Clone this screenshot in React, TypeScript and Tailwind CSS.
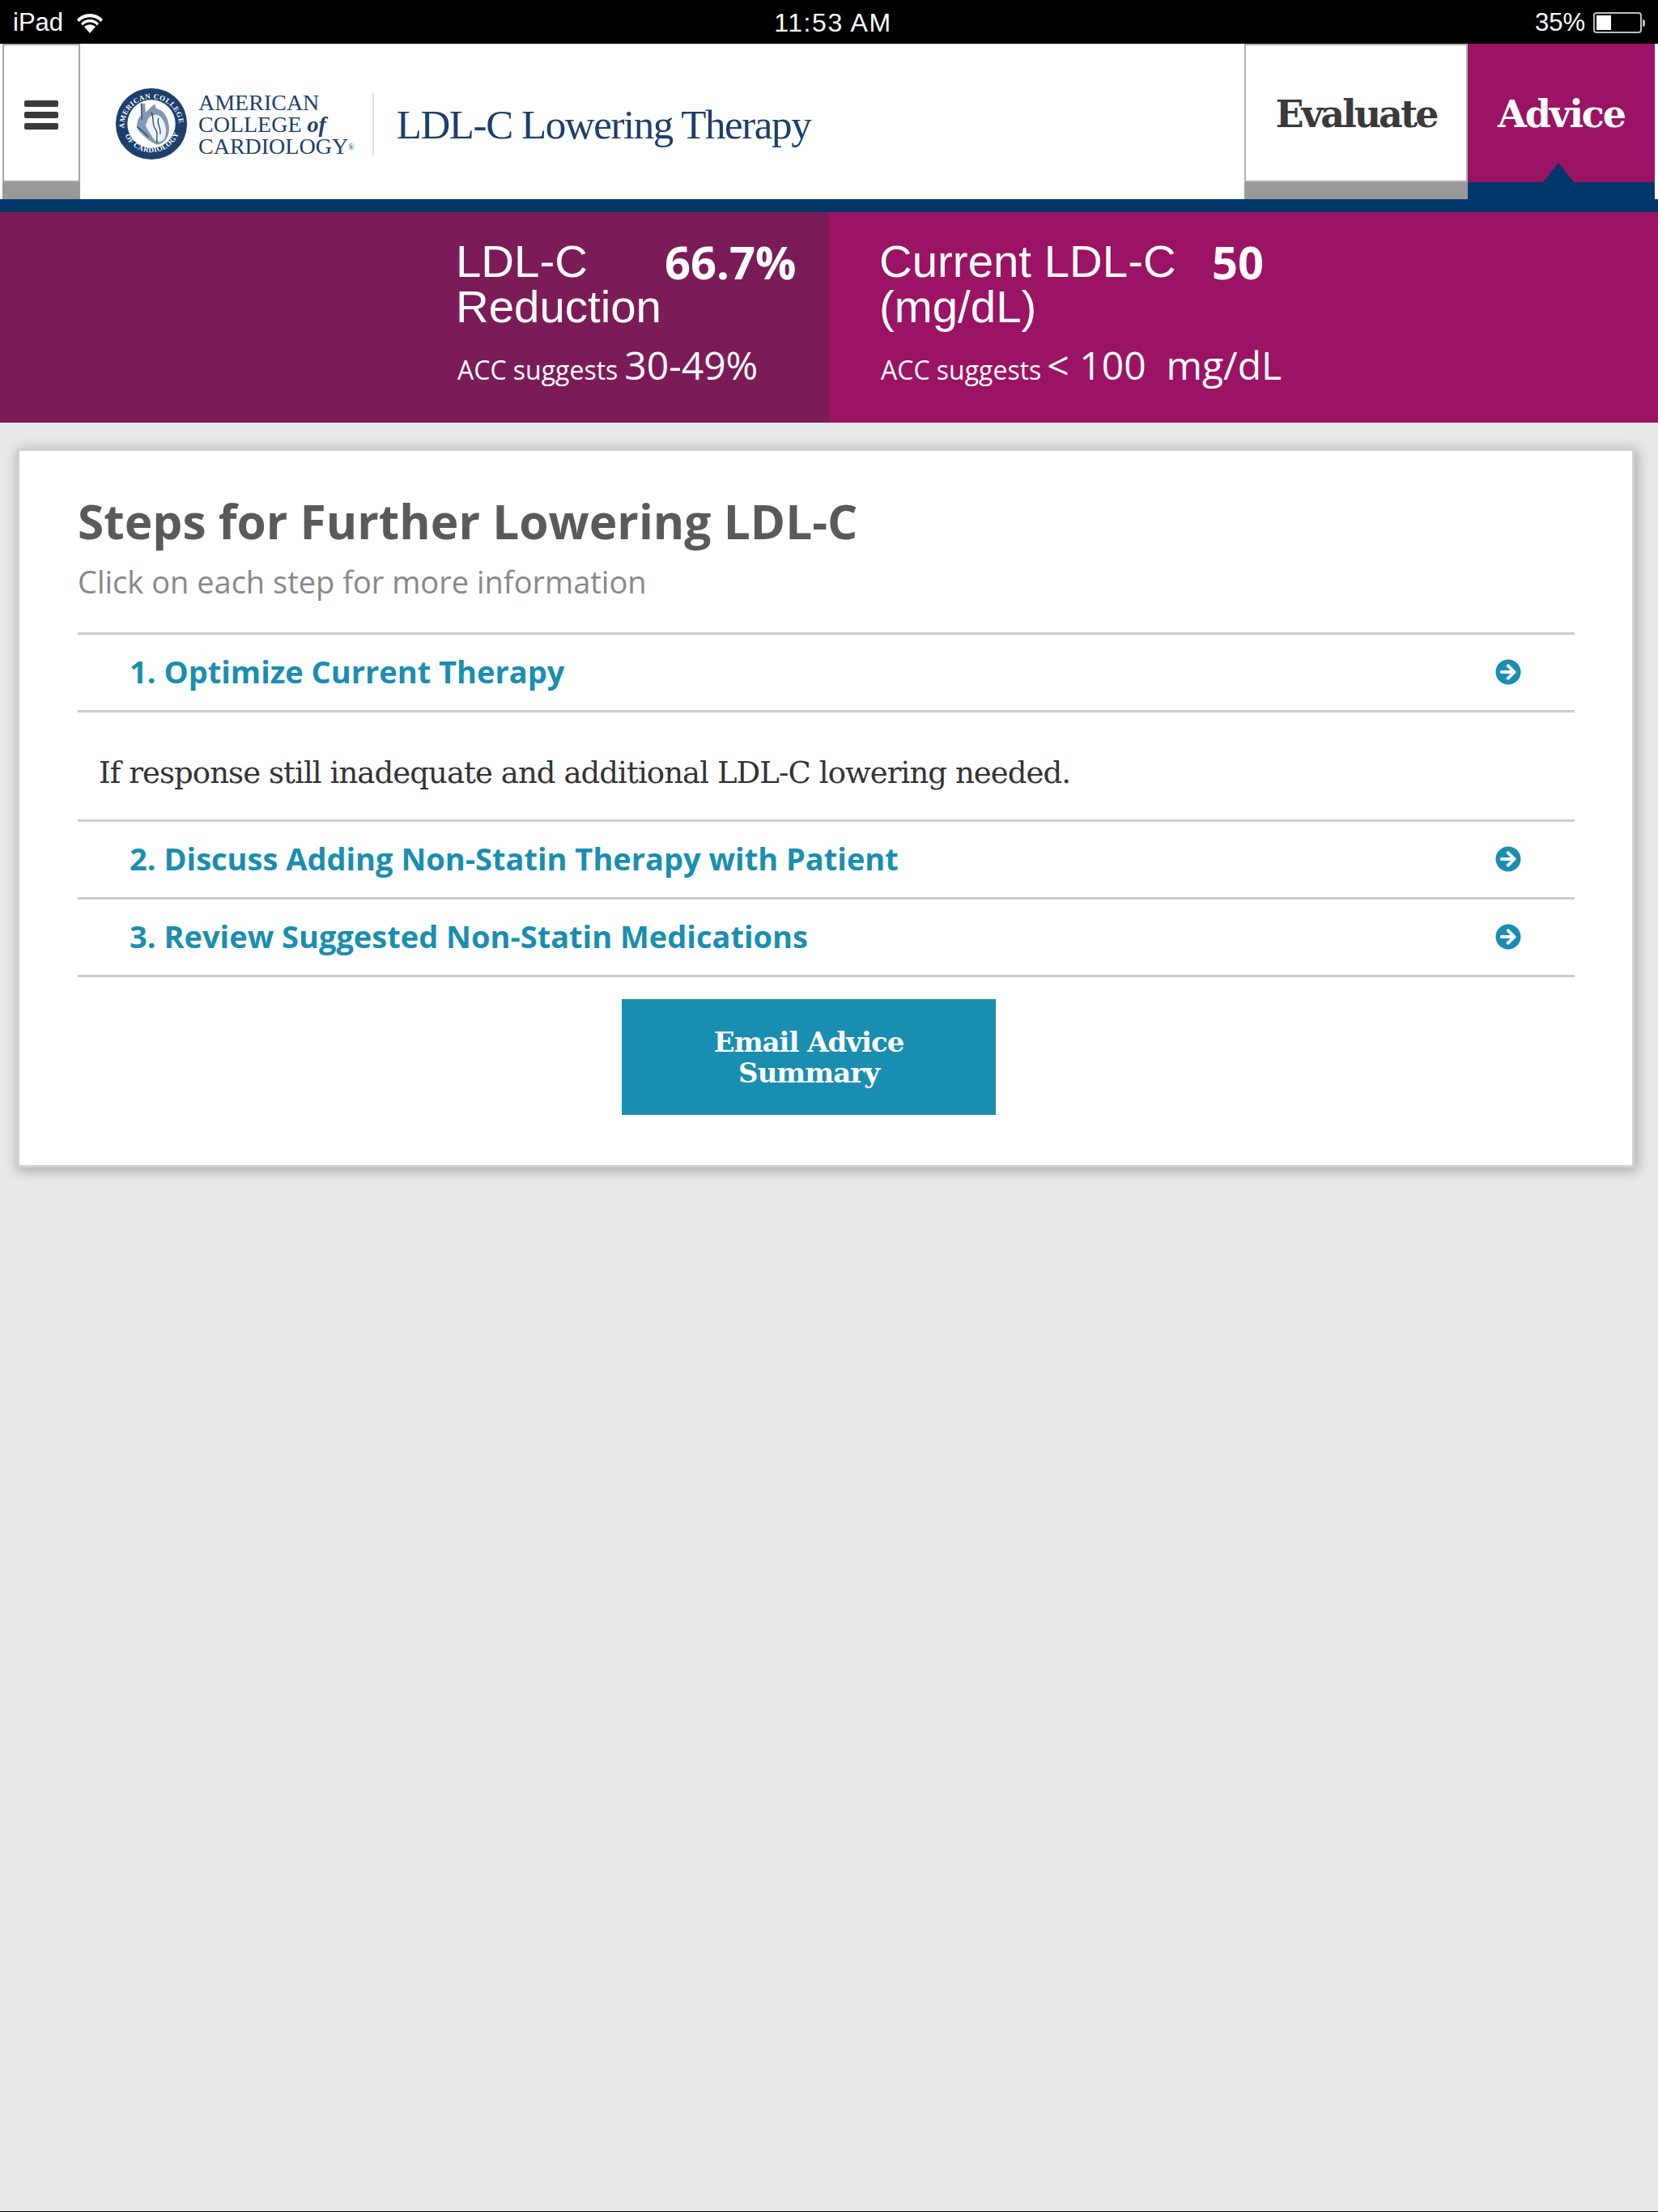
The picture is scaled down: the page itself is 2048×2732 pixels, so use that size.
import React from "react";
import { FaArrowCircleRight } from "react-icons/fa";

const Seal = () => (
  <svg width="90" height="90" viewBox="0 0 100 100" className="shrink-0">
    <defs>
      <path id="sealTop" d="M 13 56 A 37.5 37.5 0 0 1 88 50" />
      <path id="sealBottom" d="M 11 58 A 40 40 0 0 0 89 58" />
    </defs>
    <circle cx="50" cy="50" r="49" fill="#1d3f6e" />
    <circle cx="50" cy="50" r="33" fill="#fff" />
    <text fontFamily="Liberation Serif, serif" fontSize="10" fontWeight="700" fill="#fff" letterSpacing="0.6">
      <textPath href="#sealTop">AMERICAN COLLEGE</textPath>
    </text>
    <text fontFamily="Liberation Serif, serif" fontSize="10" fontWeight="700" fill="#fff" letterSpacing="0.6">
      <textPath href="#sealBottom" startOffset="8%">OF CARDIOLOGY</textPath>
    </text>
    {/* heart */}
    <path
      d="M36 22 L41 22 L42 34 C48 30 52 22 56 24 C54 28 58 30 64 32 C70 36 76 50 74 62 C72 72 64 80 56 78 C48 74 40 68 33 60 C28 54 30 44 36 38 Z"
      fill="#8298b5"
    />
    <path
      d="M46 42 C52 36 60 36 64 42 C70 50 72 60 68 70 C64 76 58 76 54 72 C50 66 44 58 42 52 Z"
      fill="#eef2f6"
    />
    <path
      d="M36 22 L37 44 M50 34 C54 42 50 50 56 58 C60 64 56 70 58 76 M60 42 C56 48 64 56 62 64 M30 54 C36 58 40 62 46 68"
      fill="none"
      stroke="#1d3f6e"
      strokeWidth="1.4"
    />
  </svg>
);

const Step = ({ label }: { label: string }) => (
  <div className="flex h-[96px] items-center justify-between border-t-[3px] border-[#cccccc] pb-[2px] pl-[64px] pr-[66px]">
    <span className="mb-[2px] text-[38px] font-bold leading-none text-[#1a8eb0]">{label}</span>
    <FaArrowCircleRight className="text-[32px] text-[#1a8eb0]" />
  </div>
);

export default function App() {
  return (
    <div className="relative flex min-h-[2732px] flex-col border-b border-black bg-[#e8e8e8] [font-family:'Open_Sans',sans-serif]">
      {/* status bar */}
      <div className="flex h-[54px] items-center justify-between bg-black pl-[16px] pr-[16px] pt-[2px] text-[31px] text-white [font-family:'Liberation_Sans',sans-serif]">
        <div className="flex w-[310px] items-center gap-[16px]">
          <span>iPad</span>
          <svg width="34" height="26" viewBox="0 0 34 26" fill="#fff">
            <path d="M17 26 L10 18 A10 10 0 0 1 24 18 Z" />
            <path d="M17 9 A15 15 0 0 0 6 14 L8 16.5 A12 12 0 0 1 26 16.5 L28 14 A15 15 0 0 0 17 9 Z" />
            <path d="M17 2 A22 22 0 0 0 1 9 L3.5 12 A18.5 18.5 0 0 1 30.5 12 L33 9 A22 22 0 0 0 17 2 Z" />
          </svg>
        </div>
        <span className="text-[32px] tracking-[0.05em]">11:53 AM</span>
        <div className="flex w-[300px] items-center justify-end gap-[10px]">
          <span>35%</span>
          <div className="flex items-center">
            <div className="flex h-[26px] w-[60px] rounded-[4px] border-2 border-[#bdbdbd] p-[2px]">
              <div className="w-[18px] bg-white" />
            </div>
            <div className="ml-[1px] h-[9px] w-[3px] rounded-r-full bg-[#bdbdbd]" />
          </div>
        </div>
      </div>

      {/* header */}
      <div className="flex h-[192px] items-stretch bg-white pl-[3px] pr-[4px]">
        <div className="flex w-[96px] flex-col">
          <div className="flex flex-1 flex-col items-center justify-center gap-[6px] border-2 border-[#a8a8a8] pt-[4px]">
            <div className="h-[8px] w-[42px] rounded-[2px] bg-[#3a3a3a]" />
            <div className="h-[8px] w-[42px] rounded-[2px] bg-[#3a3a3a]" />
            <div className="h-[8px] w-[42px] rounded-[2px] bg-[#3a3a3a]" />
          </div>
          <div className="h-[21px] bg-[#999999]" />
        </div>

        <div className="flex flex-1 items-center pl-[43px] pt-[6px]">
          <Seal />
          <div className="ml-[13px] text-[28px] leading-[27px] text-[#1d3f6e] [font-family:'Liberation_Serif',serif]">
            <div>AMERICAN</div>
            <div>
              COLLEGE <i className="font-bold">of</i>
            </div>
            <div className="whitespace-nowrap">
              CARDIOLOGY<sup className="text-[10px]">®</sup>
            </div>
          </div>
          <div className="ml-[22px] h-[76px] w-[2px] bg-[#e2e2e2]" />
          <div className="ml-[28px] mt-[2px] whitespace-nowrap text-[51px] leading-none tracking-[-0.028em] text-[#1d3f6e] [font-family:'Liberation_Serif',serif]">
            LDL-C Lowering Therapy
          </div>
        </div>

        <div className="flex w-[276px] flex-col">
          <div className="flex flex-1 items-center justify-center border-2 border-[#b0b0b0] pt-[4px] text-[46px] font-bold tracking-[-0.065em] text-[#3a3a3a] [font-family:'DejaVu_Serif',serif]">
            Evaluate
          </div>
          <div className="h-[21px] bg-[#999999]" />
        </div>

        <div className="relative flex w-[231px] flex-col bg-[#9b1364]">
          <div className="flex flex-1 items-center justify-center pt-[4px] text-[46px] font-bold tracking-[-0.045em] text-white [font-family:'DejaVu_Serif',serif]">
            Advice
          </div>
          <div className="h-[21px] bg-[#00376b]" />
          <div className="absolute bottom-[21px] left-[93px] h-0 w-0 border-x-[19px] border-b-[24px] border-x-transparent border-b-[#00376b]" />
        </div>
      </div>

      <div className="h-[16px] bg-[#00376b]" />

      {/* result band */}
      <div className="grid h-[260px] grid-cols-2 text-white">
        <div className="bg-[#7b1c58] pl-[563px] pt-[33px]">
          <div className="flex">
            <div className="w-[258px] text-[56.4px] leading-[56px] [font-family:'Liberation_Sans',sans-serif]">
              LDL-C Reduction
            </div>
            <div className="text-[56px] font-bold leading-[56px]">66.7%</div>
          </div>
          <div className="mt-[8px] flex items-baseline gap-[8px] pl-[2px]">
            <span className="text-[32px]">ACC suggests</span>
            <span className="text-[48px]">30-49%</span>
          </div>
        </div>
        <div className="bg-[#9b1364] pl-[62px] pt-[33px]">
          <div className="flex">
            <div className="w-[411px] text-[56.4px] leading-[56px] [font-family:'Liberation_Sans',sans-serif]">
              Current LDL-C (mg/dL)
            </div>
            <div className="text-[56px] font-bold leading-[56px]">50</div>
          </div>
          <div className="mt-[8px] flex items-baseline gap-[7px] pl-[2px]">
            <span className="text-[32px]">ACC suggests</span>
            <span className="whitespace-pre text-[48px]">{"< 100  mg/dL"}</span>
          </div>
        </div>
      </div>

      {/* steps card */}
      <div className="ml-[21px] mt-[32px] w-[1998px] border-[3px] border-[#d2d2d2] bg-white pb-[62px] pl-[72px] pr-[71px] pt-[46px] shadow-[2px_3px_14px_2px_rgba(0,0,0,0.25)]">
        <h1 className="text-[58.6px] font-bold leading-[80px] text-[#5a5a5a]">
          Steps for Further Lowering LDL-C
        </h1>
        <p className="mt-[10px] text-[38px] leading-[50px] text-[#888888]">
          Click on each step for more information
        </p>
        <div className="mt-[38px] border-b-[3px] border-[#cccccc]">
          <Step label="1. Optimize Current Therapy" />
          <div className="flex h-[135px] items-center border-t-[3px] border-[#cccccc] pl-[26px] pt-[18px] text-[37px] tracking-[-0.025em] text-[#333333] [font-family:'DejaVu_Serif',serif]">
            If response still inadequate and additional LDL-C lowering needed.
          </div>
          <Step label="2. Discuss Adding Non-Statin Therapy with Patient" />
          <Step label="3. Review Suggested Non-Statin Medications" />
        </div>
        <button className="ml-[672px] mt-[27px] flex h-[143px] w-[462px] items-center justify-center bg-[#1a8eb0] text-center text-[34px] font-bold leading-[38px] tracking-[-0.03em] text-white [font-family:'DejaVu_Serif',serif]">
          Email Advice
          <br />
          Summary
        </button>
      </div>
    </div>
  );
}
